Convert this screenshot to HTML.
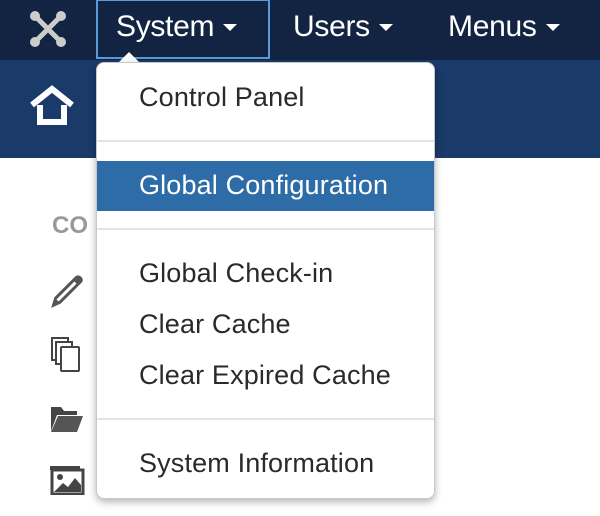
<!DOCTYPE html>
<html><head><style>
body{margin:0;width:600px;height:516px;overflow:hidden;background:#fff;font-family:"Liberation Sans",Arial,sans-serif;position:relative}
.top{position:absolute;left:0;top:0;width:600px;height:60px;background:#132443}
.sub{position:absolute;left:0;top:60px;width:600px;height:98px;background:#1a3a6a}
.nav{position:absolute;top:10px;color:#fff;font-size:30px;letter-spacing:-0.3px}
.caret{display:inline-block;width:0;height:0;border-left:7px solid transparent;border-right:7px solid transparent;border-top:7px solid #fff;vertical-align:middle;margin-left:9px;margin-top:-2px}
.sysbox{position:absolute;left:96px;top:-1px;width:170px;height:56px;border:2px solid #5a9ad8;background:#132443}
.dd{position:absolute;left:96px;top:62px;width:337px;height:435px;background:#fff;border:1px solid #c8c8c8;border-radius:8px;box-shadow:0 3px 8px rgba(0,0,0,.3)}
.arrow{position:absolute;left:118px;top:52px;width:0;height:0;border-left:11px solid transparent;border-right:11px solid transparent;border-bottom:11px solid #fff}
.it{position:absolute;left:0;width:337px;height:50px;line-height:48px;padding-left:42px;box-sizing:border-box;font-size:27px;color:#2a2a2a;letter-spacing:0.15px}
.sep{position:absolute;left:0;width:337px;height:2px;background:#e4e4e4}
.hl{background:#2d6ca6;color:#fff}
.co{position:absolute;left:52px;top:212px;font-size:24px;font-weight:bold;color:#999}
</style></head><body>
<div class="top"></div>
<div class="sub"></div>
<svg style="position:absolute;left:29px;top:10px" width="38" height="38" viewBox="0 0 38 38"><g fill="none" stroke="#ccc" stroke-width="5" stroke-linecap="round"><path d="M8 8 L30 30 M30 8 L8 30"/></g><g fill="#ccc"><circle cx="6" cy="6" r="5"/><circle cx="32" cy="6" r="5"/><circle cx="6" cy="32" r="5"/><circle cx="32" cy="32" r="5"/></g></svg>
<div class="sysbox"></div>
<div class="nav" style="left:116px">System<span class="caret"></span></div>
<div class="nav" style="left:293px">Users<span class="caret"></span></div>
<div class="nav" style="left:448px">Menus<span class="caret"></span></div>
<svg style="position:absolute;left:29px;top:85px" width="46" height="40" viewBox="0 0 46 40"><path d="M3 20 L23 4 L43 20" fill="none" stroke="#fff" stroke-width="6" stroke-linejoin="miter"/><path d="M11 20 V37 H35 V20" fill="none" stroke="#fff" stroke-width="6"/></svg>
<div class="co">CO</div>
<svg style="position:absolute;left:48px;top:272px" width="38" height="38" viewBox="0 0 36 36"><path d="M3 34 L6 24 L26 4 Q29 2 32 5 Q34 8 32 10 L12 30 Z" fill="#555"/><path d="M8 26 L25 9 L27 11 L10 28 Z" fill="#fff"/></svg>
<svg style="position:absolute;left:50px;top:336px" width="32" height="36" viewBox="0 0 32 36"><rect x="2" y="2" width="16" height="22" fill="#fff" stroke="#444" stroke-width="2"/><rect x="6" y="6" width="16" height="22" fill="#fff" stroke="#444" stroke-width="2"/><rect x="11" y="11" width="18" height="24" rx="1" fill="#fff" stroke="#444" stroke-width="2"/></svg>
<svg style="position:absolute;left:49px;top:405px" width="36" height="28" viewBox="0 0 36 28"><path d="M2 2 H12 L15 6 H28 V10 H8 L2 26 Z" fill="#444"/><path d="M9 11 H34 L28 27 H2 Z" fill="#555"/></svg>
<svg style="position:absolute;left:49px;top:465px" width="36" height="30" viewBox="0 0 36 30"><rect x="1" y="1" width="30" height="4" fill="#444"/><rect x="3" y="5" width="31" height="24" fill="none" stroke="#444" stroke-width="3"/><circle cx="11" cy="12" r="3" fill="#444"/><path d="M5 27 L14 18 L19 22 L26 13 L32 20 V27 Z" fill="#444"/></svg>
<div class="arrow"></div>
<div class="dd">
<div class="it" style="top:10px">Control Panel</div>
<div class="sep" style="top:77px"></div>
<div class="it hl" style="top:98px">Global Configuration</div>
<div class="sep" style="top:165px"></div>
<div class="it" style="top:186px">Global Check-in</div>
<div class="it" style="top:237px">Clear Cache</div>
<div class="it" style="top:288px">Clear Expired Cache</div>
<div class="sep" style="top:355px"></div>
<div class="it" style="top:376px">System Information</div>
</div>
</body></html>
